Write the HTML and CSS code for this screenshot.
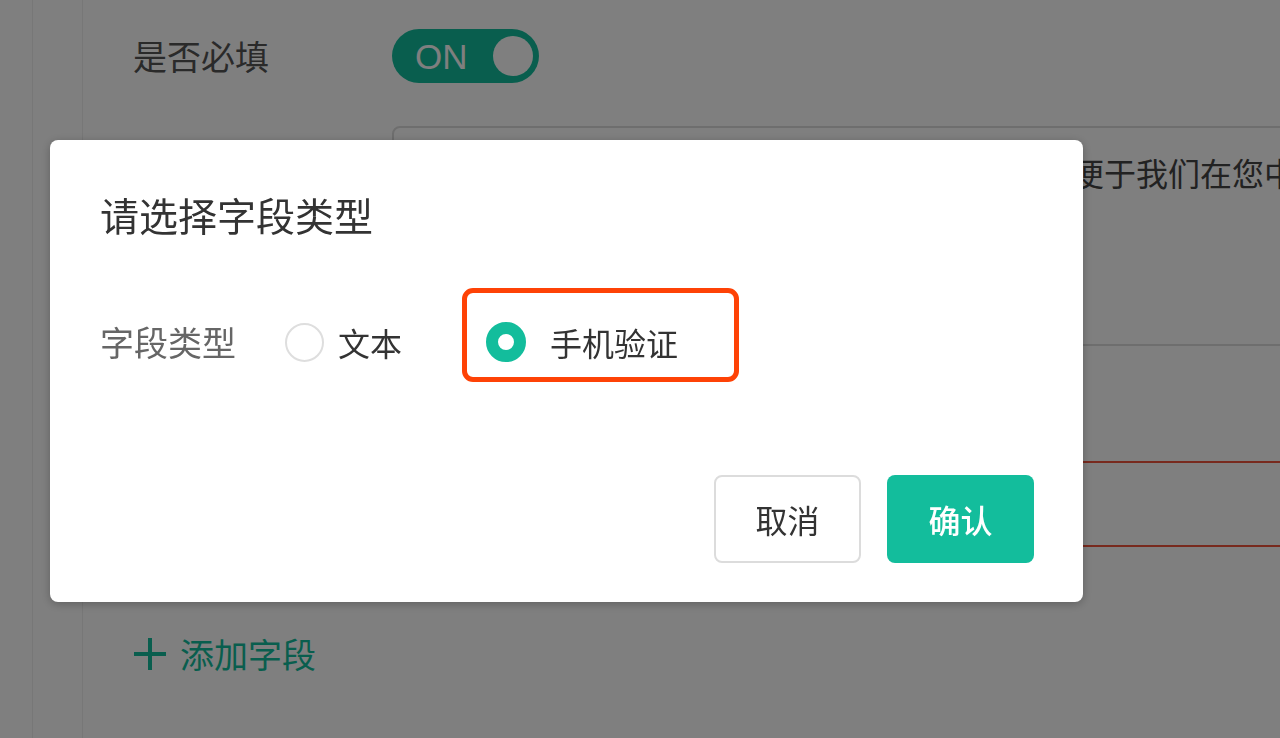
FILE: index.html
```html
<!DOCTYPE html>
<html lang="zh-CN">
<head>
<meta charset="utf-8">
<title>请选择字段类型</title>
<link rel="stylesheet" href="styles.css">
</head>
<body>
<div class="page">
  <div class="rail"></div>
  <div class="side"></div>
  <main class="main">
    <div class="form-row toggle-row">
      <span class="row-label">是否必填</span>
      <span class="toggle"><span class="toggle-text">ON</span><span class="knob"></span></span>
    </div>
    <div class="form-row textarea-row">
      <div class="textarea">请填写您的手机号码，并完成短信验证，以方便于我们在您中奖后与您联系</div>
    </div>
    <div class="form-row input-row">
      <div class="input error"></div>
    </div>
    <div class="add-field">
      <svg class="plus" viewBox="0 0 34 34" width="34" height="34"><path d="M17 1v32M1 17h32" stroke="currentColor" stroke-width="4" fill="none"/></svg>
      <span>添加字段</span>
    </div>
  </main>
</div>
<div class="mask"></div>
<div class="modal">
  <h2 class="modal-title">请选择字段类型</h2>
  <div class="field">
    <span class="field-label">字段类型</span>
    <div class="radio-group">
      <label class="radio-option">
        <span class="radio"></span>
        <span class="radio-text">文本</span>
      </label>
      <label class="radio-option checked highlighted">
        <span class="radio"></span>
        <span class="radio-text">手机验证</span>
      </label>
    </div>
  </div>
  <div class="actions">
    <button class="btn btn-cancel">取消</button>
    <button class="btn btn-primary">确认</button>
  </div>
</div>
</body>
</html>
```

FILE: styles.css
```css
* { box-sizing: border-box; }
html, body {
  margin: 0;
  padding: 0;
  width: 1280px;
  height: 738px;
  overflow: hidden;
  background: #fff;
  font-family: "Noto Sans CJK SC", "Noto Sans", sans-serif;
  color: #333;
}
.page {
  display: flex;
  height: 738px;
  overflow: hidden;
}
.rail {
  width: 33px;
  border-right: 1px solid #eee;
  flex: none;
}
.side {
  width: 50px;
  border-right: 1px solid #eee;
  flex: none;
}
.main {
  flex: 1;
  min-width: 0;
  overflow: hidden;
  padding: 29px 0 0 50px;
}
.form-row {
  display: flex;
  align-items: flex-start;
}
.toggle-row {
  align-items: center;
  height: 54px;
}
.row-label {
  width: 259px;
  flex: none;
  font-size: 34px;
  line-height: 46px;
  color: #555;
}
.toggle {
  position: relative;
  width: 147px;
  height: 54px;
  border-radius: 27px;
  background: #13bd9c;
  display: flex;
  align-items: center;
  padding-left: 23px;
}
.toggle-text {
  font-family: "Liberation Sans", Arial, sans-serif;
  font-size: 35px;
  line-height: 1;
  color: #fff;
}
.knob {
  position: absolute;
  right: 6px;
  top: 7px;
  width: 40px;
  height: 40px;
  border-radius: 50%;
  background: #fff;
}
.textarea-row { margin-top: 43px; padding-left: 259px; }
.textarea {
  width: 1000px;
  flex: none;
  height: 220px;
  border: 2px solid #dcdcdc;
  border-radius: 8px;
  padding: 21px 38px;
  font-size: 32px;
  line-height: 46px;
  color: #444;
  white-space: nowrap;
  overflow: hidden;
}
.input-row { margin-top: 115px; padding-left: 259px; }
.input {
  width: 1000px;
  flex: none;
  height: 86px;
  border: 2px solid #dcdcdc;
  border-radius: 8px;
}
.input.error { border-color: #f0543c; }
.add-field {
  margin-top: 90px;
  display: flex;
  align-items: center;
  gap: 13px;
  height: 34px;
  color: #13bd9c;
  font-size: 34px;
  line-height: 34px;
}
.plus { flex: none; }

.mask {
  position: fixed;
  inset: 0;
  background: rgba(0, 0, 0, 0.5);
}
.modal {
  position: fixed;
  left: 50px;
  top: 140px;
  width: 1033px;
  height: 462px;
  background: #fff;
  border-radius: 8px;
  box-shadow: 0 2px 10px rgba(0, 0, 0, 0.25);
  display: flex;
  flex-direction: column;
  padding: 55px 49px 39px 50px;
}
.modal-title {
  margin: 0;
  font-size: 39px;
  line-height: 38px;
  font-weight: normal;
  color: #333;
}
.field {
  margin-top: 89px;
  display: flex;
  align-items: center;
  height: 40px;
}
.field-label {
  width: 185px;
  flex: none;
  font-size: 34px;
  line-height: 40px;
  color: #666;
}
.radio-group {
  display: flex;
  align-items: center;
  gap: 84px;
}
.radio-option {
  position: relative;
  display: flex;
  align-items: center;
  gap: 14px;
  height: 40px;
}
.radio {
  width: 39px;
  height: 39px;
  border-radius: 50%;
  border: 2px solid #dedede;
  background: #fff;
  flex: none;
}
.radio-text {
  font-size: 32px;
  line-height: 40px;
  color: #333;
}
.radio-option.checked { gap: 24px; }
.radio-option.checked .radio {
  width: 40px;
  height: 40px;
  border: 12px solid #13bd9c;
}
.radio-option.highlighted::after {
  content: "";
  position: absolute;
  left: -24px;
  right: -61px;
  top: -34px;
  bottom: -20px;
  border: 5px solid #fe4206;
  border-radius: 11px;
  pointer-events: none;
}
.actions {
  margin-top: auto;
  display: flex;
  justify-content: flex-end;
  gap: 26px;
}
.btn {
  width: 147px;
  height: 88px;
  border-radius: 8px;
  font-family: "Noto Sans CJK SC", sans-serif;
  font-size: 32px;
  line-height: 1;
  cursor: pointer;
}
.btn-cancel {
  background: #fff;
  border: 2px solid #dcdcdc;
  color: #333;
}
.btn-primary {
  background: #13bd9c;
  border: none;
  color: #fff;
  font-weight: 500;
}
```
